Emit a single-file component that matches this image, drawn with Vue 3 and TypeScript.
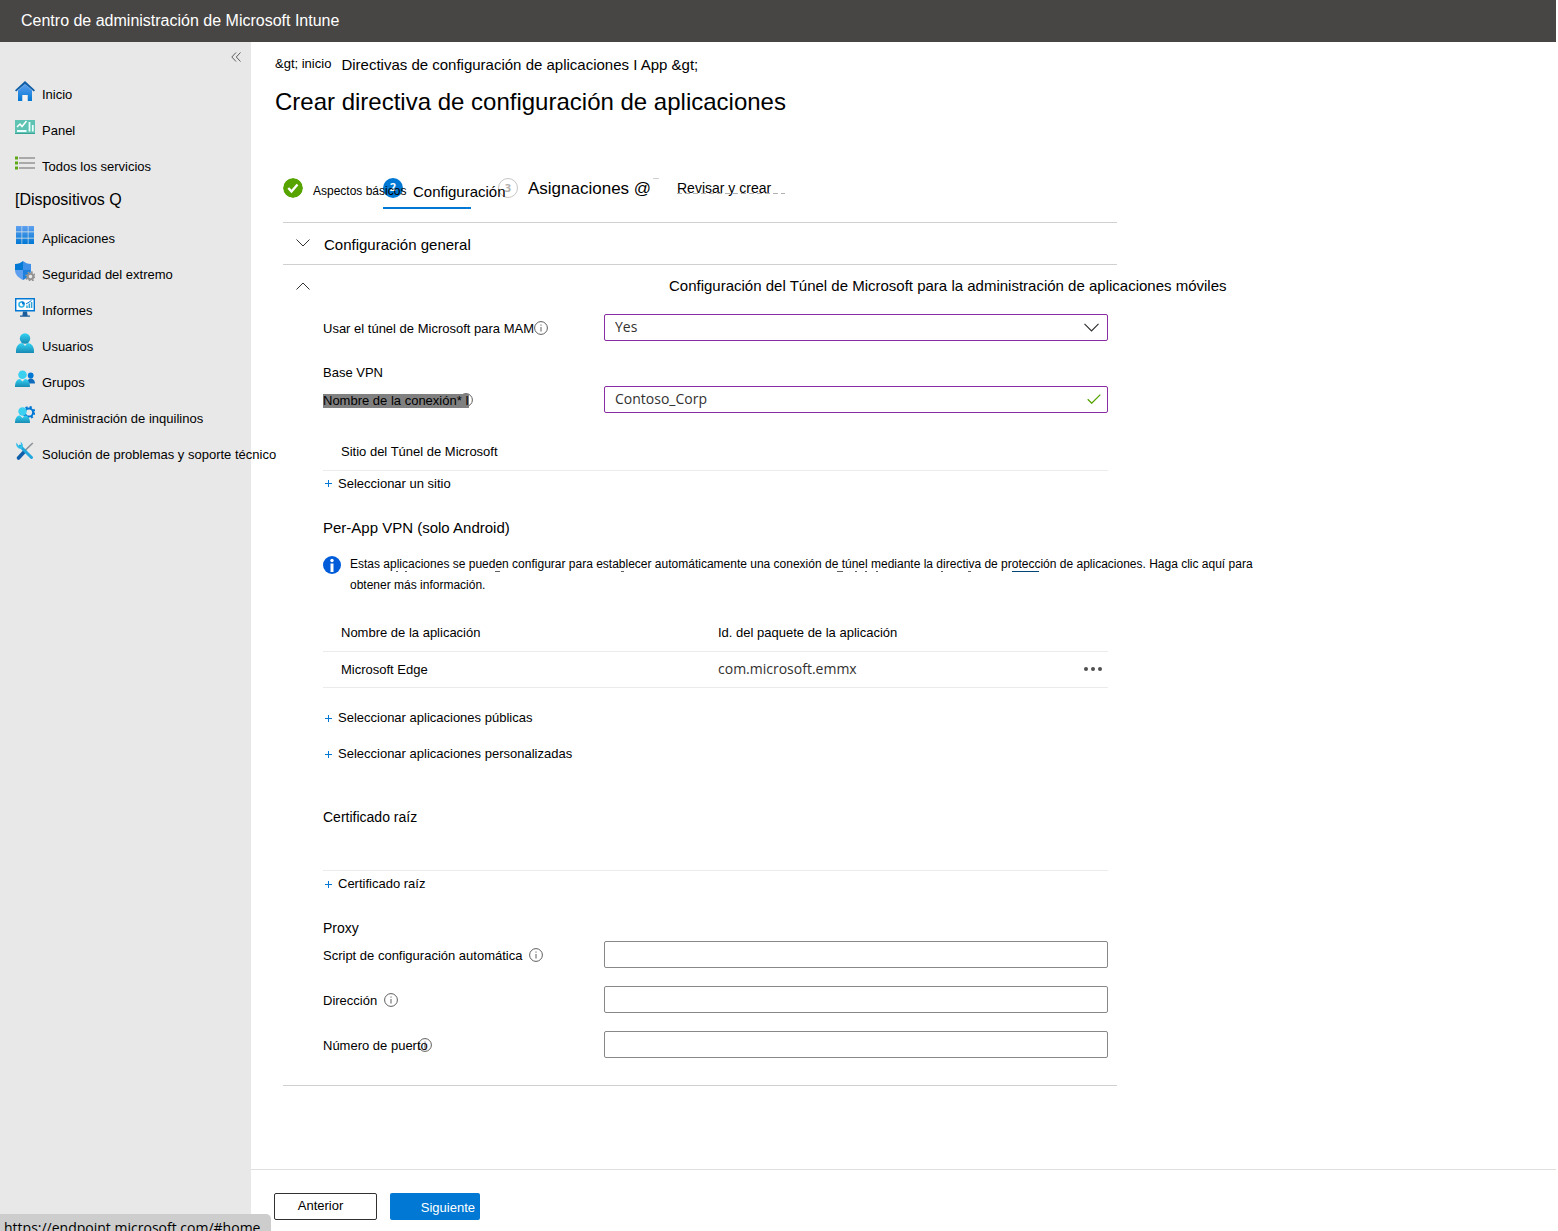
<script setup lang="ts">
import { ref } from 'vue'

interface NavItem {
  id: string
  label: string
}

const navItems: NavItem[] = [
  { id: 'home', label: 'Inicio' },
  { id: 'dashboard', label: 'Panel' },
  { id: 'services', label: 'Todos los servicios' },
  { id: 'devices', label: '[Dispositivos Q' },
  { id: 'apps', label: 'Aplicaciones' },
  { id: 'security', label: 'Seguridad del extremo' },
  { id: 'reports', label: 'Informes' },
  { id: 'users', label: 'Usuarios' },
  { id: 'groups', label: 'Grupos' },
  { id: 'tenant', label: 'Administración de inquilinos' },
  { id: 'support', label: 'Solución de problemas y soporte técnico' },
]

const useTunnel = ref('Yes')
const connectionName = ref('Contoso_Corp')

const proxyFields = [
  { id: 'script', label: 'Script de configuración automática', tight: false },
  { id: 'address', label: 'Dirección', tight: false },
  { id: 'port', label: 'Número de puerto', tight: true },
]
</script>

<template>
  <div class="page">
    <svg class="defs" aria-hidden="true">
      <defs>
        <linearGradient id="blue" x1="0" y1="0" x2="0" y2="1">
          <stop offset="0" stop-color="#5ea0ef" />
          <stop offset="1" stop-color="#0078d4" />
        </linearGradient>
        <linearGradient id="cyan" x1="0" y1="0" x2="0" y2="1">
          <stop offset="0" stop-color="#32d4f5" />
          <stop offset="1" stop-color="#198ab3" />
        </linearGradient>
        <symbol id="info" viewBox="0 0 14 14">
          <circle cx="7" cy="7" r="6.4" fill="none" stroke="#605e5c" />
          <path d="M7 6v4.5M7 3.5v1.2" stroke="#605e5c" fill="none" />
        </symbol>
        <symbol id="plus" viewBox="0 0 9 9">
          <path d="M1 4.5h7M4.5 1v7" stroke="#0078d4" fill="none" />
        </symbol>
      </defs>
    </svg>

    <header class="topbar">Centro de administración de Microsoft Intune</header>

    <div class="body">
      <aside class="sidebar">
        <button class="collapse" type="button" aria-label="Contraer menú">
          <svg width="10" height="10" viewBox="0 0 10 10" fill="none" stroke="#605e5c">
            <path d="M5 .5L.8 5 5 9.500M9.500 .5L5.300 5l4.200 4.500" />
          </svg>
        </button>
        <nav>
          <a v-for="item in navItems" :key="item.id" href="#" :class="['nav-item', { large: item.id === 'devices' }]">
            <svg v-if="item.id !== 'devices'" class="nav-icon" viewBox="0 0 20 20" aria-hidden="true">
              <g v-if="item.id === 'home'">
                <path d="M3 9.500L10 3l7 6.500V20h-4.500v-6h-5v6H3z" fill="url(#blue)" />
                <path d="M7.500 14h5v6h-5z" fill="#f2f2f2" />
                <path d="M10 0l10 9.200-1.200 1.300L10 3 1.200 10.500 0 9.200z" fill="#0f5fa8" />
              </g>
              <g v-else-if="item.id === 'dashboard'">
                <path d="M0 3h20v14H0z" fill="#5fc3b4" />
                <path d="M0 16h20v1H0z" fill="#38a596" />
                <path d="M2 10l3-3 2 2.500L11.500 4" stroke="#fff" stroke-width="1.500" fill="none" />
                <path d="M2 14h9.500M14.500 5v9.500M17.800 8v6.500" stroke="#e8fffb" stroke-width="1.800" />
              </g>
              <g v-else-if="item.id === 'services'">
                <path d="M4 5h16M4 10h16M4 15h16" stroke="#949494" stroke-width="1.400" />
                <path d="M0 3.500h3v3H0zM0 8.500h3v3H0zM0 13.500h3v3H0z" fill="#5ea818" />
              </g>
              <g v-else-if="item.id === 'apps'" fill="url(#blue)">
                <path d="M1 1h5.600v5.600H1zM7.200 1h5.600v5.600H7.200zM13.400 1H19v5.600h-5.600zM1 7.200h5.600v5.600H1zM7.200 7.200h5.600v5.600H7.200zM13.400 7.200H19v5.600h-5.600zM1 13.400h5.600V19H1zM7.200 13.400h5.600V19H7.200zM13.400 13.400H19V19h-5.600z" />
              </g>
              <g v-else-if="item.id === 'security'">
                <path d="M0 3c3.500 0 5.500-1 8-3v9H0z" fill="#0078d4" />
                <path d="M8 0c2.500 2 4.500 3 8 3v6H8z" fill="#3f90e8" />
                <path d="M0 9h8v10c-4-2-8-5-8-10z" fill="#5ea0ef" />
                <path d="M8 9h8c0 5-4 8-8 10z" fill="#1c80dc" />
                <circle cx="15.500" cy="15.500" r="4.400" fill="none" stroke="#949494" stroke-width="1.800" stroke-dasharray="1.700 1.755" />
                <circle cx="15.500" cy="15.500" r="2.800" fill="#e8e8e8" stroke="#949494" stroke-width="2" />
              </g>
              <g v-else-if="item.id === 'reports'">
                <path d="M.7 1.700h18.600v12H.7z" fill="#fff" stroke="#0078d4" stroke-width="1.400" />
                <path d="M8 14.500h4l.6 4H15v1.300H5v-1.300h2.400z" fill="#1b5e9b" />
                <circle cx="6.500" cy="7.500" r="2.500" fill="none" stroke="#32b4e5" stroke-width="1.600" />
                <path d="M6.500 4.200a3.300 3.300 0 0 1 3.300 3.300H7.300" fill="#0078d4" />
                <path d="M12 11V8.500M14.300 11V6.500M16.600 11V5" stroke="#32a4d5" stroke-width="1.500" />
                <path d="M11 7l5.500-3.500" stroke="#0078d4" />
              </g>
              <g v-else-if="item.id === 'users'" fill="url(#cyan)">
                <path d="M1 20v-2c0-5 3-8 6.500-8l2.500 3 2.500-3c3.500 0 6.500 3 6.500 8v2z" />
                <circle cx="10" cy="5.500" r="5.200" />
              </g>
              <g v-else-if="item.id === 'groups'">
                <circle cx="15.700" cy="6.500" r="2.900" fill="#0078d4" />
                <path d="M12 14.500c0-3 1.500-5 3.700-5s4.300 2 4.300 5z" fill="#0f6cbd" />
                <path d="M0 18c0-5 2-8 5-8l2.500 2.500L10 10c3 0 5 3 5 8z" fill="url(#cyan)" />
                <circle cx="7.500" cy="5.800" r="4.300" fill="#3bd0ef" />
              </g>
              <g v-else-if="item.id === 'tenant'">
                <circle cx="14" cy="7.500" r="5.300" fill="none" stroke="#0078d4" stroke-width="2.400" stroke-dasharray="2.100 2.063" />
                <circle cx="14" cy="7.500" r="4.100" fill="none" stroke="#0078d4" stroke-width="2" />
                <path d="M0 18c0-5 2-7.500 5-7.500L7.500 13l2.500-2.500c3 0 5 2.500 5 7.500z" fill="url(#cyan)" />
                <circle cx="7.500" cy="6.500" r="4.200" fill="#3bd0ef" />
              </g>
              <g v-else>
                <path d="M17.800 2L9 10.500" stroke="#8a9299" stroke-width="1.600" />
                <path d="M9.500 10.500l-6 6.500" stroke="#0f5fa8" stroke-width="3.600" stroke-linecap="round" />
                <path d="M5 5l11.500 11.500" stroke="#22a7dc" stroke-width="3" stroke-linecap="round" />
                <path d="M1.500 1.500A4.500 4.500 0 0 0 7 7.500 4.500 4.500 0 0 0 5.500 .8l.7 3.400-2 1.500z" fill="#32bfea" />
              </g>
            </svg>
            <span>{{ item.label }}</span>
          </a>
        </nav>
      </aside>

      <main class="main">
        <div class="content">
          <nav class="breadcrumb">
            <a href="#">&amp;gt; inicio</a>
            <a href="#" class="crumb-large">Directivas de configuración de aplicaciones I App &amp;gt;</a>
          </nav>
          <h1>Crear directiva de configuración de aplicaciones</h1>

          <div class="wizard">
            <ol class="steps">
              <li class="step first">
                <svg class="badge" viewBox="0 0 20 20" aria-hidden="true">
                  <circle cx="10" cy="10" r="10" fill="#57a300" />
                  <path d="M5.300 10l3.200 3.500 6-7" fill="none" stroke="#fff" stroke-width="2.400" />
                </svg>
                <span class="step-label small">Aspectos básicos</span>
              </li>
              <li class="step second">
                <span class="badge active">2</span>
                <span class="step-label medium">Configuración</span>
              </li>
              <li class="step third">
                <span class="badge pending">3</span>
                <span class="step-label big">Asignaciones @</span>
              </li>
              <li class="step fourth">
                <span class="ghost" aria-hidden="true"></span>
                <span class="step-label">Revisar y crear</span>
              </li>
            </ol>

            <section class="accordion">
              <h2>
                <button type="button" class="accordion-head general" aria-expanded="false">
                  <svg width="14" height="8" viewBox="0 0 14 8" fill="none" stroke="#323130"><path d="M.5 .5L7 7 13.500 .5" /></svg>
                  <span>Configuración general</span>
                </button>
              </h2>
            </section>

            <section class="accordion last">
              <h2>
                <button type="button" class="accordion-head tunnel" aria-expanded="true">
                  <svg width="14" height="8" viewBox="0 0 14 8" fill="none" stroke="#323130"><path d="M.5 7.500L7 1l6.500 6.500" /></svg>
                  <span>Configuración del Túnel de Microsoft para la administración de aplicaciones móviles</span>
                </button>
              </h2>

              <form class="form" @submit.prevent>
                <div class="field">
                  <label for="tunnel"><span>Usar el túnel de Microsoft para MAM</span><svg class="info"><use href="#info" /></svg></label>
                  <div class="control">
                    <select id="tunnel" v-model="useTunnel" class="box valid">
                      <option>Yes</option>
                      <option>No</option>
                    </select>
                    <svg class="mark chevron" width="15" height="9" viewBox="0 0 15 9" fill="none" stroke="#323130"><path d="M.5 .8l7 7 7-7" stroke-width="1.200" /></svg>
                  </div>
                </div>

                <h3 class="base">Base VPN</h3>
                <div class="field">
                  <label for="connection"><span class="selected">Nombre de la conexión* I</span><svg class="info tight"><use href="#info" /></svg></label>
                  <div class="control">
                    <input id="connection" v-model="connectionName" class="box valid" type="text" />
                    <svg class="mark" width="14" height="10" viewBox="0 0 14 10" fill="none" stroke="#57a300"><path d="M.7 5.200l4 4L13.300 .6" stroke-width="1.300" /></svg>
                  </div>
                </div>

                <table class="grid site">
                  <thead><tr><th>Sitio del Túnel de Microsoft</th></tr></thead>
                </table>
                <button type="button" class="add"><svg><use href="#plus" /></svg>Seleccionar un sitio</button>

                <h3 class="per-app">Per-App VPN (solo Android)</h3>
                <div class="notice">
                  <svg width="18" height="18" viewBox="0 0 18 18" aria-hidden="true">
                    <circle cx="9" cy="9" r="9" fill="#015cda" />
                    <path d="M7.500 7.500h3V16h-3z" fill="#fff" />
                    <circle cx="9" cy="4.500" r="1.700" fill="#fff" />
                  </svg>
                  <p>
                    Estas aplicaciones se pueden configurar para establecer automáticamente una conexión de túnel mediante la directiva de protección de aplicaciones. Haga clic aquí para<br />obtener más información.
                    <svg class="traces" width="700" height="1" viewBox="0 0 700 1" fill="none" aria-hidden="true">
                      <path d="M46 .5h2M55 .5h2M145 .5h5M271 .5h3M487 .5h6M505 .5h2M515 .5h2M526 .5h2M591 .5h2M618 .5h3" stroke="#605e5c" />
                      <path d="M662 .5h27" stroke="#004578" />
                    </svg>
                  </p>
                </div>

                <table class="grid apps">
                  <thead>
                    <tr><th>Nombre de la aplicación</th><th>Id. del paquete de la aplicación</th><th></th></tr>
                  </thead>
                  <tbody>
                    <tr>
                      <td>Microsoft Edge</td>
                      <td class="package">com.microsoft.emmx</td>
                      <td class="actions">
                        <button type="button" aria-label="Más opciones">
                          <svg width="20" height="6" viewBox="0 0 20 6" fill="#505050"><circle cx="3" cy="3" r="2" /><circle cx="10" cy="3" r="2" /><circle cx="17" cy="3" r="2" /></svg>
                        </button>
                      </td>
                    </tr>
                  </tbody>
                </table>
                <button type="button" class="add public"><svg><use href="#plus" /></svg>Seleccionar aplicaciones públicas</button>
                <button type="button" class="add custom"><svg><use href="#plus" /></svg>Seleccionar aplicaciones personalizadas</button>

                <h3 class="cert">Certificado raíz</h3>
                <button type="button" class="add"><svg><use href="#plus" /></svg>Certificado raíz</button>

                <h3 class="proxy">Proxy</h3>
                <div v-for="f in proxyFields" :key="f.id" class="field proxy-field">
                  <label :for="f.id"><span>{{ f.label }}</span><svg :class="['info', f.tight ? 'tight' : 'spaced']"><use href="#info" /></svg></label>
                  <div class="control"><input :id="f.id" type="text" class="box" /></div>
                </div>
              </form>
            </section>
          </div>
        </div>

        <footer class="footer">
          <button type="button" class="btn">Anterior</button>
          <button type="button" class="btn primary">Siguiente</button>
        </footer>
      </main>
    </div>

    <div class="status">https://endpoint.microsoft.com/#home</div>
  </div>
</template>

<style>
body {
  margin: 0;
  background: #fff;
}
</style>

<style scoped>
.page {
  position: relative;
  display: flex;
  flex-direction: column;
  min-height: 100vh;
  overflow: hidden;
  font: 13px/18px "Liberation Sans", Arial, sans-serif;
  color: #000;
}
.page *,
.page {
  box-sizing: border-box;
}
.defs {
  position: absolute;
  width: 0;
  height: 0;
}
button {
  padding: 0;
  border: 0;
  background: none;
  font: inherit;
  color: inherit;
  cursor: pointer;
}
a {
  color: inherit;
  text-decoration: none;
}
h1,
h2,
h3,
p,
ol {
  margin: 0;
  padding: 0;
  font-weight: normal;
}
.topbar {
  height: 42px;
  margin-right: 2px;
  padding-left: 21px;
  background: #484644;
  color: #fff;
  font-size: 16px;
  line-height: 42px;
}
.body {
  display: flex;
  flex: 1;
}
.sidebar {
  flex: 0 0 251px;
  min-width: 0;
  background: #e8e8e8;
}
.collapse {
  display: block;
  height: 10px;
  margin: 10px 10px 14px auto;
}
.collapse svg {
  display: block;
}
.nav-item {
  display: flex;
  align-items: center;
  gap: 7px;
  height: 36px;
  padding-left: 15px;
  white-space: nowrap;
}
.nav-item span {
  padding-top: 2px;
}
.nav-item.large {
  padding-bottom: 6px;
  font-size: 16px;
}
.nav-icon {
  flex: none;
  width: 20px;
  height: 20px;
  margin-bottom: 6px;
}
.main {
  display: flex;
  flex: 1;
  flex-direction: column;
  min-width: 0;
}
.content {
  flex: 1;
  padding: 12px 24px 24px;
}
.breadcrumb {
  display: flex;
  gap: 10px;
  height: 22px;
  line-height: 20px;
}
.crumb-large {
  font-size: 15px;
  line-height: 22px;
}
h1 {
  margin-top: 10px;
  font-size: 24px;
  line-height: 32px;
}
.wizard {
  max-width: 842px;
  margin-top: 60px;
  padding-left: 8px;
}
.steps {
  display: flex;
  height: 44px;
  list-style: none;
}
.step {
  display: flex;
  gap: 10px;
  height: 31px;
  white-space: nowrap;
}
.first {
  width: 100px;
}
.second {
  position: relative;
  width: 115px;
}
.second::after {
  content: "";
  position: absolute;
  bottom: 0;
  left: 0;
  width: 88px;
  height: 2px;
  background: #0078d4;
}
.third {
  width: 179px;
}
.fourth {
  position: relative;
}
.fourth::before {
  content: "";
  position: absolute;
  top: 0;
  left: -24px;
  width: 6px;
  height: 1px;
  background: #d0d0d0;
}
.badge {
  flex: none;
  width: 20px;
  height: 20px;
  border-radius: 50%;
  font: bold 11px/18px "Open Sans", sans-serif;
  text-align: center;
}
.active {
  background: #0078d4;
  color: #fff;
}
.pending {
  border: 1px solid #c8c6c4;
  color: #b3b0ad;
}
.step-label {
  position: relative;
  z-index: 1;
  font-size: 14px;
  line-height: 20px;
}
.step-label.small {
  font-size: 12px;
  line-height: 26px;
}
.step-label.medium {
  font-size: 15px;
  line-height: 28px;
}
.step-label.big {
  font-size: 17px;
  line-height: 22px;
}
.ghost {
  position: absolute;
  top: 15px;
  left: 0;
  width: 108px;
  height: 1px;
  background: repeating-linear-gradient(90deg, #b0b0b0 0 5px, transparent 5px 8px);
}
.accordion {
  border-top: 1px solid #d2d0ce;
}
.accordion.last {
  border-bottom: 1px solid #d2d0ce;
}
.accordion-head {
  display: flex;
  align-items: center;
  gap: 14px;
  width: 100%;
  height: 41px;
  padding-left: 13px;
  font-size: 15px;
  text-align: left;
  white-space: nowrap;
}
.accordion-head svg {
  flex: none;
}
.accordion-head.general {
  padding-top: 2px;
}
.accordion-head.general svg {
  margin-bottom: 4px;
}
.accordion-head.tunnel {
  gap: 359px;
}
.form {
  padding: 8px 9px 27px 40px;
}
.field {
  display: flex;
  align-items: center;
}
.field label {
  display: flex;
  align-items: center;
  flex: 0 0 281px;
}
.field label span {
  position: relative;
  z-index: 1;
  margin-top: 2px;
}
.info {
  flex: none;
  width: 14px;
  height: 14px;
}
.info.tight {
  margin-left: -10px;
}
.info.spaced {
  margin-left: 7px;
}
.field label .selected {
  background: #808080;
  line-height: 14px;
}
.control {
  position: relative;
  flex: 1;
}
.box {
  display: block;
  width: 100%;
  height: 27px;
  padding: 0 10px 2px;
  border: 1px solid #8a8886;
  border-radius: 2px;
  background: #fff;
  appearance: none;
  color: #323130;
  font: 14px/20px "Open Sans", "Noto Sans", sans-serif;
}
.box.valid {
  border-color: #8a2da5;
}
.mark {
  position: absolute;
  top: 8px;
  right: 7px;
}
.mark.chevron {
  top: 9px;
  right: 9px;
}
h3 {
  font-size: 14px;
  line-height: 18px;
}
.base {
  margin: 23px 0 4px;
  font-size: 13px;
}
.grid {
  width: 100%;
  border-collapse: collapse;
  table-layout: fixed;
}
.grid th,
.grid td {
  height: 36px;
  padding: 0 0 0 18px;
  border-bottom: 1px solid #edebe9;
  font-weight: normal;
  text-align: left;
}
.grid th:nth-child(2) {
  width: 330px;
}
.grid th:nth-child(3) {
  width: 78px;
}
.site {
  margin-top: 21px;
}
.grid.apps {
  margin-top: 20px;
}
.grid .package {
  padding-bottom: 2px;
  color: #323130;
  font: 14px/20px "Open Sans", "Noto Sans", sans-serif;
}
.grid .actions {
  padding: 0 5px 2px 0;
}
.actions button {
  display: block;
  margin: 0 0 0 auto;
}
.actions svg {
  display: block;
}
.add {
  display: flex;
  align-items: center;
  gap: 5px;
  margin-top: 4px;
  padding-left: 1px;
}
.add svg {
  width: 9px;
  height: 9px;
}
.per-app {
  margin-top: 25px;
  font-size: 15px;
  line-height: 20px;
}
.notice {
  display: flex;
  gap: 9px;
  margin-top: 16px;
}
.notice > svg {
  flex: none;
  margin-top: 2px;
}
.notice p {
  position: relative;
  font-size: 12px;
  line-height: 21px;
  white-space: nowrap;
}
.traces {
  position: absolute;
  top: 17px;
  left: 0;
}
.add.public {
  margin-top: 21px;
}
.add.custom {
  margin-top: 18px;
}
.cert {
  height: 63px;
  margin-top: 45px;
  border-bottom: 1px solid #edebe9;
}
.proxy {
  margin: 26px 0 4px;
}
.proxy-field + .proxy-field {
  margin-top: 18px;
}
.footer {
  display: flex;
  gap: 13px;
  height: 62px;
  margin-right: 2px;
  padding: 23px 23px 0;
  border-top: 1px solid #e1dfdd;
}
.btn {
  width: 103px;
  height: 27px;
  padding: 0 10px 2px 0;
  border: 1px solid #323130;
  border-radius: 2px;
}
.btn.primary {
  width: 90px;
  padding: 2px 5px 0 0;
  border: 0;
  background: #0078d4;
  color: #fff;
  text-align: right;
}
.status {
  position: absolute;
  bottom: 0;
  left: 0;
  height: 17px;
  padding: 3px 11px 0 4px;
  border-radius: 0 5px 0 0;
  background: #cdcdcd;
  font: 14px/22px "Open Sans", "Noto Sans", sans-serif;
  white-space: nowrap;
}
</style>
